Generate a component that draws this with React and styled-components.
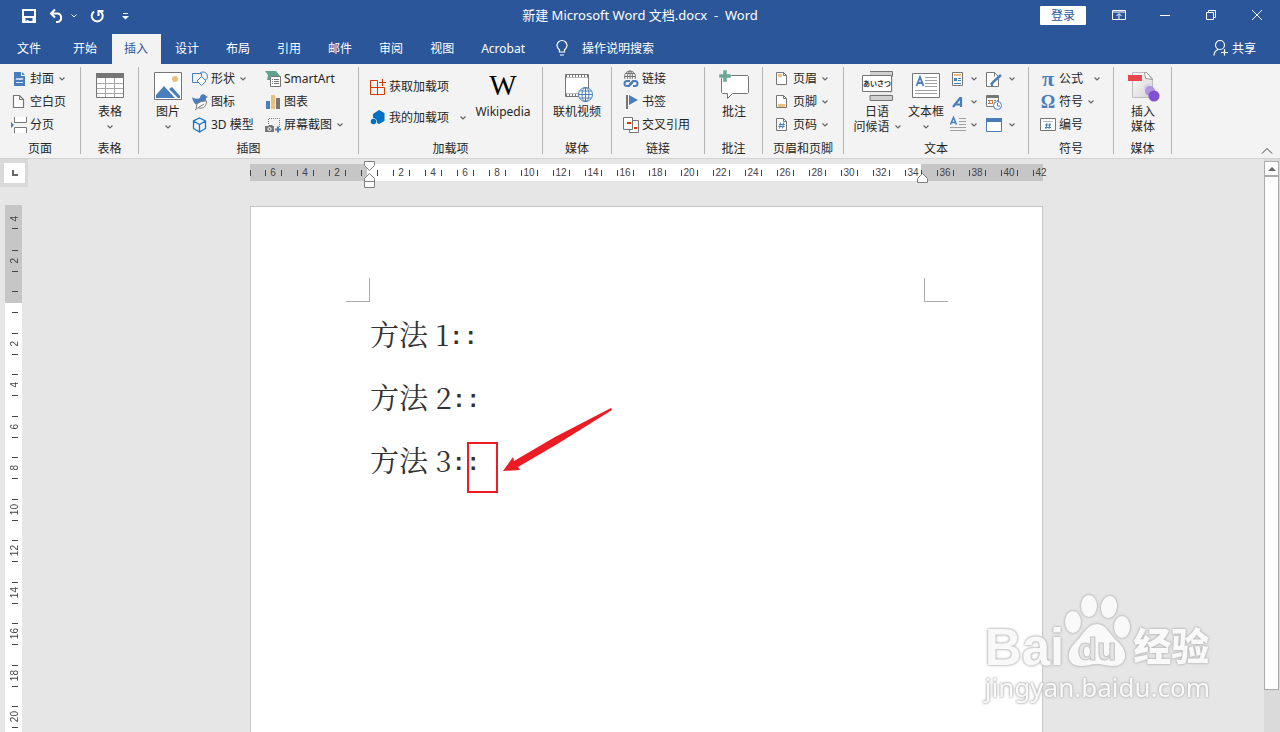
import React from 'react'
import styled, { createGlobalStyle, css } from 'styled-components'

const GlobalStyle = createGlobalStyle`
  * {
    box-sizing: border-box;
  }

  body {
    margin: 0;
    overflow: hidden;
    background: #e6e6e6;
    color: #262626;
    font: 12px/15px 'Noto Sans', 'Noto Sans CJK SC', sans-serif;
  }

  button {
    padding: 0;
    border: 0;
    background: none;
    color: inherit;
    font: inherit;
    white-space: nowrap;
  }

  svg {
    display: block;
    flex: none;
    overflow: visible;
  }
`

const blue = '#2b579a'
const iconBlue = '#4a7ebb'
const grey = '#767676'

const Window = styled.div`
  display: flex;
  flex-direction: column;
  height: 100vh;
`

/* title bar */

const Header = styled.header`
  background: ${blue};
  color: #fff;
`

const TitleBar = styled.div`
  display: grid;
  grid-template-columns: 1fr auto 1fr;
  align-items: center;
  height: 30px;
`

const QuickAccess = styled.div`
  display: flex;
  align-items: center;
  gap: 13px;
  padding: 2px 0 0 22px;
`

const UndoGroup = styled.div`
  display: flex;
  align-items: center;
  gap: 7px;
`

const CustomizeButton = styled.button`
  margin-left: 5px;
`

const Title = styled.h1`
  margin: 0;
  font-size: 13px;
  font-weight: normal;
  white-space: pre;
`

const WindowControls = styled.div`
  display: flex;
  align-items: center;
  justify-content: flex-end;
`

const LoginButton = styled.button`
  width: 46px;
  height: 19px;
  margin-right: 10px;
  border-radius: 1px;
  background: #fff;
  color: ${blue};
`

const ControlButton = styled.button`
  display: flex;
  align-items: center;
  justify-content: center;
  width: 46px;
  height: 30px;
`

const TabBar = styled.nav`
  display: flex;
  gap: 2px;
  height: 34px;
  padding: 4px 24px 0 5px;
`

const Tab = styled.button`
  padding: 0 13px 2px 12px;

  &:first-child {
    margin-right: 5px;
  }

  ${props => props.$active && css`
    background: #f3f3f3;
    color: ${blue};
  `}
`

const TellMe = styled.button`
  display: flex;
  align-items: center;
  gap: 14px;
  margin-left: 16px;
  padding-bottom: 2px;
`

const Share = styled.button`
  display: flex;
  align-items: center;
  gap: 4px;
  margin-left: auto;
  padding-bottom: 2px;
`

/* ribbon */

const RibbonBar = styled.div`
  display: flex;
  flex: none;
  padding: 3px 7px 4px 0;
  border-bottom: 1px solid #d2d2d2;
  background: #f3f3f3;
`

const GroupBox = styled.section`
  display: flex;
  flex-direction: column;
  flex: none;
  width: ${props => props.$width}px;
  height: 87px;
  border-right: 1px solid #b4b4b4;
`

const GroupContent = styled.div`
  display: flex;
  flex: none;
  height: 74px;
  padding-left: ${props => props.$pad}px;
`

const GroupLabel = styled.h2`
  margin: 0;
  font-size: 12px;
  font-weight: normal;
  line-height: 15px;
  text-align: center;
`

const Column = styled.div`
  display: flex;
  flex-direction: column;
  flex: none;
  width: ${props => props.$width ? `${props.$width}px` : 'auto'};
  padding-top: ${props => props.$tall ? 4 : 0}px;
`

const SmallButton = styled.button`
  display: flex;
  align-items: center;
  gap: 3px;
  height: ${props => props.$tall ? 31 : 23}px;
`

const BigButton = styled.button`
  display: flex;
  flex-direction: column;
  align-items: center;
  flex: none;
  width: ${props => props.$width}px;
  padding-top: 4px;

  > svg {
    margin-bottom: 1px;
  }
`

const ArrowLine = styled.span`
  display: flex;
  align-items: center;
  justify-content: center;
  height: 15px;
`

const Chevron = styled(ChevronIcon)`
  margin-left: ${props => props.$gap || 2}px;
`

const WikiMark = styled.span`
  height: 33px;
  color: #000;
  font: 29px/29px 'Liberation Serif', serif;
`

const Collapse = styled.button`
  align-self: flex-end;
  margin-left: auto;
`

/* document area */

const Workspace = styled.main`
  display: grid;
  grid-template-columns: 29px 1fr 16px;
  flex: 1;
  min-height: 0;
`

const LeftRail = styled.div`
  display: flex;
  flex-direction: column;
  min-height: 0;
`

const Corner = styled.div`
  flex: none;
  width: 28px;
  height: 28px;
  padding: 4px 3px 4px 4px;
  background: #d9d9d9;
`

const TabStop = styled.button`
  display: flex;
  align-items: center;
  justify-content: center;
  width: 21px;
  height: 20px;
  background: #fdfdfd;
`

const VerticalRuler = styled.div`
  flex: 1;
  width: 17px;
  min-height: 0;
  margin: 18px 0 0 5px;
  overflow: hidden;
  background: linear-gradient(#c6c6c6 98px, #fff 98px);
`

const VerticalScale = styled.div`
  margin-top: -7px;
`

const VerticalCell = styled.div`
  display: flex;
  align-items: center;
  justify-content: center;
  height: 42px;
  padding-left: 2px;
  color: #444;
  font: 10px/10px 'Liberation Sans', sans-serif;
  background:
    linear-gradient(#444, #444) 7px 10px / 6px 1px no-repeat,
    linear-gradient(#444, #444) 7px 31px / 6px 1px no-repeat;

  &:nth-child(even) {
    height: 41px;
  }

  &:first-child {
    background: linear-gradient(#444, #444) 7px 30px / 6px 1px no-repeat;
  }

  span {
    writing-mode: vertical-rl;
    transform: rotate(180deg);
  }
`

const Canvas = styled.div`
  display: flex;
  flex-direction: column;
  align-items: center;
  min-width: 0;
  min-height: 0;
  overflow: hidden;
`

const HorizontalRuler = styled.div`
  position: relative;
  display: flex;
  flex: none;
  width: 793px;
  height: 17px;
  margin: 5px 0 25px;
  padding-left: 7px;
  background:
    linear-gradient(#444, #444) 0 6px / 1px 6px no-repeat,
    linear-gradient(90deg, #c6c6c6 117px, #fff 117px, #fff 671px, #c6c6c6 671px);
`

const HorizontalCell = styled.div`
  display: flex;
  align-items: center;
  justify-content: center;
  flex: none;
  width: 32px;
  color: #444;
  font: 10px/17px 'Liberation Sans', sans-serif;
  background:
    linear-gradient(#444, #444) 8px 6px / 1px 6px no-repeat,
    linear-gradient(#444, #444) 24px 6px / 1px 6px no-repeat;

  &:last-of-type {
    background: linear-gradient(#444, #444) 8px 6px / 1px 6px no-repeat;
  }
`

const IndentMarker = styled.svg`
  position: absolute;
  top: ${props => props.$top}px;
  left: ${props => props.$left}px;
`

const Page = styled.article`
  position: relative;
  flex: 1;
  width: 793px;
  border: 1px solid #c6c6c6;
  border-bottom: 0;
  background: #fff;
`

const CropMarks = styled.div`
  display: flex;
  justify-content: space-between;
  padding: 71px 94px 0 95px;
`

const CropMark = styled.i`
  width: 24px;
  height: 24px;
  border-bottom: 1px solid #ababab;
  border-${props => props.$side}: 1px solid #ababab;
`

const Line = styled.p`
  height: 63px;
  margin: 0 119px;
  color: #333;
  font: 29px/63px 'Noto Serif CJK SC', 'Noto Sans CJK SC', serif;
  font-variant-numeric: tabular-nums;
`

const Colons = styled.span`
  font: bold 24px/24px 'Liberation Mono', monospace;
  vertical-align: 2px;
`

const Highlight = styled.div`
  position: absolute;
  top: 235px;
  left: 216px;
  width: 31px;
  height: 51px;
  border: 2px solid #ed1c24;
`

const Arrow = styled.svg`
  position: absolute;
  top: 201px;
  left: 252px;
`

const ScrollBar = styled.div`
  display: flex;
  flex-direction: column;
  padding: 2px 1px 0 0;
  background: #dadada;
`

const ScrollButton = styled.button`
  display: flex;
  align-items: center;
  justify-content: center;
  height: 15px;
  border: 1px solid #ababab;
  background: #fff;
`

const ScrollThumb = styled.div`
  height: 92%;
  max-height: calc(100% - 57px);
  border: 1px solid #ababab;
  background: #fff;
`

/* watermark */

const Watermark = styled.div`
  position: absolute;
  right: 70px;
  bottom: 28px;
  color: #f9f9f9;
  filter: drop-shadow(0 0 1px #aaa) drop-shadow(0 0 1px #ccc);
`

const Brand = styled.div`
  display: flex;
  align-items: flex-end;
  height: 76px;
  font: bold 51px/44px 'Liberation Sans', sans-serif;
`

const BrandCn = styled.span`
  font: 900 38px/52px 'Noto Sans CJK SC', sans-serif;
`

const Site = styled.div`
  font: 26px/34px 'Noto Sans', sans-serif;
`

/* icons */

function ChevronIcon({ className }) {
  return (
    <svg className={className} width="6" height="4" fill="none" stroke="#666" strokeWidth="1.2">
      <path d="M.5 .5L3 3L5.500 .5" />
    </svg>
  )
}

const Small = ({ children }) => (
  <svg width="16" height="16" viewBox="0 0 16 16" fill="none" stroke={grey}>
    {children}
  </svg>
)

const Big = ({ children }) => (
  <svg width="32" height="32" viewBox="0 0 32 32" fill="none" stroke={grey}>
    {children}
  </svg>
)

const Sheet = ({ children }) => (
  <Small>
    <path d="M2.500 1.500h7l3 3v9h-10z" fill="#fff" />
    <path d="M9.500 1.500v3h3" />
    {children}
  </Small>
)

const CoverIcon = () => (
  <Small>
    <path d="M3 1h7v4h4v10H3z" fill={iconBlue} stroke="none" />
    <path d="M11 1l3 3h-3z" fill={iconBlue} stroke="none" />
    <path d="M5 9l1-2 1 2 1-2 1 2 1-2 1 2 1-2M5 11.500h7" stroke="#fff" strokeWidth=".8" />
  </Small>
)

const BlankPageIcon = () => (
  <Small>
    <path d="M2.500 1.500h6l4 4v8h-10z" fill="#fff" strokeWidth="1.2" />
    <path d="M8.500 1.500v4h4" />
  </Small>
)

const PageBreakIcon = () => (
  <Small>
    <path d="M3.500 0v5.500h12V0M3.500 16v-5.500h12V16" fill="#fff" />
    <path d="M0 5l3 3-3 3z" fill={iconBlue} stroke="none" />
  </Small>
)

const TableIcon = () => (
  <Big>
    <path d="M2.500 2.500h27v24h-27z" fill="#fff" />
    <path d="M2 2h28v5H2z" fill={grey} stroke="none" />
    <path d="M3 12.500h26M3 17.500h26M3 22.500h26M11.500 7v19M20.500 7v19" stroke="#a6a6a6" />
  </Big>
)

const PictureIcon = () => (
  <Big>
    <path d="M2.500 1.500h27v27h-27z" fill="#fff" />
    <circle cx="23" cy="8" r="3" fill="#ecc07c" stroke="none" />
    <path d="M4 27v-3l8-9 11 12zM17 18l3-2 8 9v2h-2z" fill={iconBlue} stroke="none" />
  </Big>
)

const ShapesIcon = () => (
  <Small>
    <circle cx="11" cy="5.500" r="4.500" stroke={iconBlue} />
    <path d="M.5 2.500h9v9h-9z" fill="#f3f3f3" stroke={iconBlue} />
    <path d="M9.500 5.500l4.500 4.500-4.500 4.500L5 10z" fill="#fff" stroke={iconBlue} />
  </Small>
)

const IconsIcon = () => (
  <Small>
    <path d="M0 3c2 2 5 2 8 1 0-4 4-5 6-2l2 1-2 1c0 5-3 7-7 7-4 0-6-3-7-8z" fill={iconBlue} stroke="none" />
    <path d="M4.500 14c-1-5 4-7 10-7 0 5-3 8-8 7M3 16l4-3 5-3" fill="#fff" />
  </Small>
)

const CubeIcon = () => (
  <Small>
    <path d="M7.500 1l6 3v7.500l-6 3.500-6-3.500V4zM1.500 4l6 3.500L13.500 4M7.500 7.500V15" stroke="#1a74c4" strokeWidth="1.300" />
  </Small>
)

const SmartArtIcon = () => (
  <Small>
    <path d="M0 0h11l4 5H5v4H2l1-5z" fill="#5fa38c" stroke="none" />
    <path d="M5.500 5.500h10v10h-10z" fill="#fff" />
    <path d="M7 8.500h1M9 8.500h5M7 10.500h1M9 10.500h5M7 12.500h1M9 12.500h5" />
  </Small>
)

const ChartIcon = () => (
  <Small>
    <path d="M1 7h4v8H1z" fill={iconBlue} stroke="none" />
    <path d="M6 1h4v14H6z" fill="#ecc07c" stroke="none" />
    <path d="M11 4h4v11h-4z" fill={grey} stroke="none" />
  </Small>
)

const ScreenshotIcon = () => (
  <Small>
    <path d="M3.500 7V1.500h11V10" strokeDasharray="1 1" />
    <path d="M0 9h3l1-1h3l1 1h1v6H0z" fill={grey} stroke="none" />
    <circle cx="4.500" cy="12" r="1.500" stroke="#fff" />
    <path d="M13 9.500v6M10 12.500h6" stroke={iconBlue} strokeWidth="2" />
  </Small>
)

const StoreIcon = () => (
  <Small>
    <path d="M7.500 1.500h-7v14h14v-7H.5M7.500 1.500v14M12.500 0v7M9 3.500h7" stroke="#d83b01" />
  </Small>
)

const MyAddinsIcon = () => (
  <Small>
    <path d="M9 0l5.500 3v8L9 14l-2-1a4 4 0 0 0-4-5V4z" fill="#0072c6" stroke="none" />
    <circle cx="3.500" cy="11.500" r="2.800" fill="#0072c6" stroke="none" />
  </Small>
)

const VideoIcon = () => (
  <Big>
    <path d="M4.500 3.500h23v22h-23z" fill="#fff" />
    <path d="M5 5h22M5 24h14" strokeWidth="3" />
    <path d="M6 5h21M6 24h12" stroke="#fff" strokeWidth="2" strokeDasharray="2 1" />
    <circle cx="24.500" cy="23.500" r="7" fill="#fff" stroke={iconBlue} />
    <ellipse cx="24.500" cy="23.500" rx="3.500" ry="7" stroke={iconBlue} />
    <path d="M17.500 23.500h14M24.500 16.500v14M18.500 20h12M18.500 27h12" stroke={iconBlue} />
  </Big>
)

const HyperlinkIcon = () => (
  <Small>
    <circle cx="7" cy="5.500" r="5.500" />
    <ellipse cx="7" cy="5.500" rx="2.500" ry="5.500" />
    <path d="M1.500 5.500h11M2.500 2.500h9M7 .5V8" />
    <path d="M1 8h15v8H1z" fill="#f3f3f3" stroke="none" />
    <path d="M7 10H4a2.300 2.300 0 0 0 0 5h2l4-4M10 15h2a2.300 2.300 0 0 0 0-5h-2l-4 4" stroke={iconBlue} strokeWidth="2" />
  </Small>
)

const BookmarkIcon = () => (
  <Small>
    <path d="M4 1v14" strokeWidth="2" />
    <path d="M6 1l9 5-9 5z" fill={iconBlue} stroke="none" />
  </Small>
)

const CrossRefIcon = () => (
  <Small>
    <path d="M6.500 3.500h9v12h-9z" fill="#fff" />
    <path d="M.5 .5h9v12h-9z" fill="#fff" />
    <path d="M4 6h4M11 11h3" stroke="#d83b01" strokeWidth="2" />
  </Small>
)

const CommentIcon = () => (
  <Big>
    <path d="M5.500 4.500h24l1 1v16l-1 1h-15l-5 5v-5h-5l-1-1v-16z" fill="#fff" />
    <path d="M1 3h4v-4h4v4h4v4H9v4H5V7H1z" fill="#6fa796" stroke="#f3f3f3" strokeWidth=".5" />
  </Big>
)

const HeaderIcon = () => (
  <Sheet><path d="M4 3h4v3H4z" fill="#ecc07c" stroke="none" /></Sheet>
)

const FooterIcon = () => (
  <Sheet><path d="M4 10h7v3H4z" fill="#ecc07c" stroke="none" /></Sheet>
)

const PageNumberIcon = () => (
  <Sheet><path d="M6.500 5.500l-1 6M9.500 5.500l-1 6M5 7.500h6M4.500 9.500h6" stroke={iconBlue} /></Sheet>
)

const GreetingIcon = () => (
  <Big>
    <path d="M9 .5h22.500v29H9z" fill="#d0d0d0" stroke="none" />
    <path d="M9 .5h22.500v5M9 29.500h22.500v-5H9z" />
    <path d="M0 21.500h32v2H0z" fill="#f3f3f3" stroke="none" />
    <path d="M1.500 4.500h29v16h-29z" fill="#fff" />
    <text x="16" y="15" textAnchor="middle" fontSize="7" fontWeight="bold" fill="#333" stroke="none">あいさつ</text>
  </Big>
)

const TextBoxIcon = () => (
  <Big>
    <path d="M2.500 2.500h27v24h-27z" fill="#fff" />
    <path d="M15 6.500h12M15 9.500h12M15 12.500h12M15 15.500h12M5 19.500h22M5 22.500h22" stroke="#a0a0a0" />
    <path d="M6.500 15L10 6l3.500 9M7.500 12h5" stroke={iconBlue} strokeWidth="1.800" />
  </Big>
)

const QuickPartsIcon = () => (
  <Small>
    <path d="M2.500 1.500h10v13h-10z" fill="#fff" />
    <path d="M4 4h7" stroke="#ecc07c" strokeWidth="2" />
    <path d="M4 8.500h3" stroke={iconBlue} strokeWidth="3" />
    <path d="M8 7.500h3M8 9.500h3M4 12.500h7" stroke={iconBlue} />
  </Small>
)

const WordArtIcon = () => (
  <Small>
    <path d="M3 13l7-9h1v9M5 10.500h6" stroke={iconBlue} strokeWidth="2.200" />
  </Small>
)

const DropCapIcon = () => (
  <Small>
    <path d="M.5 7.500L3.500 .5l3 7M2 5.500h3.500" stroke={iconBlue} strokeWidth="1.500" />
    <path d="M9 1.500h7M9 4.500h7M9 7.500h7M0 10.500h16M0 13.500h16" stroke="#a0a0a0" />
  </Small>
)

const SignatureIcon = () => (
  <Small>
    <path d="M.5 1.500h8l4 4v10H.5z" fill="#fff" />
    <path d="M8.500 1.500v4" />
    <path d="M5 14l2-3 8-7M5 14h2" stroke={iconBlue} strokeWidth="2.500" />
  </Small>
)

const DateTimeIcon = () => (
  <Small>
    <path d="M.5 1.500h12v11H.5z" fill="#fff" />
    <path d="M1 3h11" strokeWidth="2" />
    <path d="M2 6.500h10M2 9.500h9" strokeDasharray="2 1" />
    <path d="M3.500 6.500h3v3h-3z" stroke="#e07b2a" fill="#fff" />
    <circle cx="11.500" cy="11.500" r="4" fill="#fff" stroke={iconBlue} />
    <path d="M11.500 9v3H14" stroke={iconBlue} />
  </Small>
)

const ObjectIcon = () => (
  <Small>
    <path d="M.5 1.500h15v13H.5z" fill="#fff" stroke={iconBlue} />
    <path d="M0 3h16" stroke={iconBlue} strokeWidth="4" />
  </Small>
)

const NumberIcon = () => (
  <Small>
    <path d="M.5 1.500h15v12H.5z" fill="#fff" />
    <path d="M3 4.500h10" stroke="#bbb" />
    <path d="M7 6l-1 6M10 6l-1 6M5 8h6M5 10.500h6" stroke={iconBlue} />
  </Small>
)

const SymbolMark = styled.span`
  width: 16px;
  color: ${iconBlue};
  font: bold ${props => props.$size}px/18px 'Liberation Serif', serif;
  text-align: center;
`

const MediaIcon = () => (
  <Big>
    <defs>
      <linearGradient id="sheet" x1="0" y1="0" x2="1" y2="1">
        <stop offset="0" stopColor="#fff" />
        <stop offset="1" stopColor="#d2d2d2" />
      </linearGradient>
    </defs>
    <path d="M5.500 1.500h14l6 6v19h-20z" fill="url(#sheet)" stroke="#bdbdbd" />
    <path d="M17.500 1.500l1 6 7 1-6-7z" fill="#fff" stroke="#999" />
    <path d="M1 4h14v6H1z" fill="#e5474b" stroke="none" />
    <circle cx="21" cy="17" r="4" fill="#d9cdf0" stroke="none" />
    <circle cx="23" cy="20" r="5" fill="#b094e0" stroke="none" />
    <circle cx="27" cy="25" r="5.500" fill="#8250d4" stroke="none" />
  </Big>
)

const SaveIcon = () => (
  <svg width="14" height="14" fill="none" stroke="#fff" strokeWidth="2">
    <path d="M1 1h12v12H1zM1 8h12" />
    <path d="M2 8v5M12 8v5" strokeWidth="3" />
    <path d="M5.500 11v3" />
  </svg>
)

const UndoIcon = () => (
  <svg width="15" height="14" fill="none" stroke="#fff" strokeWidth="2">
    <path d="M6 .5L2 4.500l4 4M2 4.500h6.500a4.300 4.300 0 0 1 0 8.500H7" />
  </svg>
)

const RedoIcon = () => (
  <svg width="14" height="14" fill="none" stroke="#fff" strokeWidth="2">
    <path d="M4 2.500a5.500 5.500 0 1 0 6.500 0M8.500 7V2h5" />
  </svg>
)

const CustomizeIcon = () => (
  <svg width="7" height="7" fill="#fff">
    <path d="M1 0h5v1H1zM0 3h7L3.500 6.500z" />
  </svg>
)

const WhiteChevron = () => (
  <svg width="6" height="4" fill="none" stroke="#fff">
    <path d="M.5 .5L3 3L5.500 .5" />
  </svg>
)

const BulbIcon = () => (
  <svg width="12" height="16" fill="none" stroke="#fff" strokeWidth="1.200">
    <path d="M3.500 12V10C2 8.500 1 7.500 1 5.500a5 5 0 0 1 10 0c0 2-1 3-2.500 4.500v2zM4 15h4" />
  </svg>
)

const PersonIcon = () => (
  <svg width="15" height="16" fill="none" stroke="#fff" strokeWidth="1.200">
    <circle cx="7" cy="5" r="4.500" />
    <path d="M1 15.500c0-3 2-5 4-6M11.500 9v6.500M8 12.500h7" />
  </svg>
)

const Paw = () => (
  <svg width="69" height="76" viewBox="1 0 69 76" fill="currentColor">
    <ellipse cx="10" cy="28" rx="8" ry="11" />
    <ellipse cx="26" cy="12" rx="8" ry="11" />
    <ellipse cx="46" cy="13" rx="8" ry="11" transform="rotate(8 46 13)" />
    <ellipse cx="59" cy="33" rx="8" ry="11" />
    <path d="M34 30c9 0 12 10 21 18 12 11 8 24-5 24-7 0-10-2-16-2s-10 2-16 2C4 72 2 59 12 49c9-9 12-19 22-19z" />
    <text x="34" y="66" textAnchor="middle" fontSize="32" fill="#e4e4e4" stroke="#c4c4c4" strokeWidth="1">du</text>
  </svg>
)

const Group = ({ label, width, pad, children }) => (
  <GroupBox $width={width} aria-label={label}>
    <GroupContent $pad={pad}>{children}</GroupContent>
    <GroupLabel>{label}</GroupLabel>
  </GroupBox>
)

const Item = ({ icon, label, title, arrow, gap, tall }) => (
  <SmallButton $tall={tall} aria-label={label || title}>
    {icon}
    {label}
    {arrow && <Chevron $gap={gap} />}
  </SmallButton>
)

const Ribbon = () => (
  <RibbonBar>
    <Group label="页面" width={81} pad={11}>
      <Column>
        <Item icon={<CoverIcon />} label="封面" arrow />
        <Item icon={<BlankPageIcon />} label="空白页" />
        <Item icon={<PageBreakIcon />} label="分页" />
      </Column>
    </Group>
    <Group label="表格" width={58} pad={5}>
      <BigButton $width={48}>
        <TableIcon />
        表格
        <ArrowLine><ChevronIcon /></ArrowLine>
      </BigButton>
    </Group>
    <Group label="插图" width={220} pad={5}>
      <BigButton $width={48}>
        <PictureIcon />
        图片
        <ArrowLine><ChevronIcon /></ArrowLine>
      </BigButton>
      <Column $width={73}>
        <Item icon={<ShapesIcon />} label="形状" arrow />
        <Item icon={<IconsIcon />} label="图标" />
        <Item icon={<CubeIcon />} label="3D 模型" />
      </Column>
      <Column>
        <Item icon={<SmartArtIcon />} label="SmartArt" />
        <Item icon={<ChartIcon />} label="图表" />
        <Item icon={<ScreenshotIcon />} label="屏幕截图" arrow />
      </Column>
    </Group>
    <Group label="加载项" width={184} pad={11}>
      <Column $width={103} $tall>
        <Item icon={<StoreIcon />} label="获取加载项" tall />
        <Item icon={<MyAddinsIcon />} label="我的加载项" arrow gap={8} tall />
      </Column>
      <BigButton $width={60}>
        <WikiMark>W</WikiMark>
        Wikipedia
      </BigButton>
    </Group>
    <Group label="媒体" width={69} pad={4}>
      <BigButton $width={60}>
        <VideoIcon />
        联机视频
      </BigButton>
    </Group>
    <Group label="链接" width={93} pad={11}>
      <Column>
        <Item icon={<HyperlinkIcon />} label="链接" />
        <Item icon={<BookmarkIcon />} label="书签" />
        <Item icon={<CrossRefIcon />} label="交叉引用" />
      </Column>
    </Group>
    <Group label="批注" width={58} pad={5}>
      <BigButton $width={48}>
        <CommentIcon />
        批注
      </BigButton>
    </Group>
    <Group label="页眉和页脚" width={81} pad={11}>
      <Column>
        <Item icon={<HeaderIcon />} label="页眉" arrow />
        <Item icon={<FooterIcon />} label="页脚" arrow />
        <Item icon={<PageNumberIcon />} label="页码" arrow />
      </Column>
    </Group>
    <Group label="文本" width={185} pad={8}>
      <BigButton $width={50}>
        <GreetingIcon />
        日语
        <ArrowLine>问候语<Chevron $gap={5} /></ArrowLine>
      </BigButton>
      <BigButton $width={48}>
        <TextBoxIcon />
        文本框
        <ArrowLine><ChevronIcon /></ArrowLine>
      </BigButton>
      <Column $width={36}>
        <Item icon={<QuickPartsIcon />} title="文档部件" arrow />
        <Item icon={<WordArtIcon />} title="艺术字" arrow />
        <Item icon={<DropCapIcon />} title="首字下沉" arrow />
      </Column>
      <Column>
        <Item icon={<SignatureIcon />} title="签名行" arrow gap={4} />
        <Item icon={<DateTimeIcon />} title="日期和时间" />
        <Item icon={<ObjectIcon />} title="对象" arrow gap={4} />
      </Column>
    </Group>
    <Group label="符号" width={85} pad={11}>
      <Column>
        <Item icon={<SymbolMark $size={22}>π</SymbolMark>} label="公式" arrow gap={8} />
        <Item icon={<SymbolMark $size={18}>Ω</SymbolMark>} label="符号" arrow />
        <Item icon={<NumberIcon />} label="编号" />
      </Column>
    </Group>
    <Group label="媒体" width={58} pad={5}>
      <BigButton $width={48}>
        <MediaIcon />
        插入
        <span>媒体</span>
      </BigButton>
    </Group>
    <Collapse aria-label="折叠功能区">
      <svg width="12" height="6" fill="none" stroke="#444">
        <path d="M1 5.500l5-5 5 5" />
      </svg>
    </Collapse>
  </RibbonBar>
)

const tabs = ['文件', '开始', '插入', '设计', '布局', '引用', '邮件', '审阅', '视图', 'Acrobat']

const scale = last => Array.from({ length: last / 2 }, (_, i) => (i + 1) * 2)
const columns = [6, 4, 2, '', ...scale(42)]
const rows = [4, 2, '', ...scale(20)]

const App = () => (
  <Window>
    <GlobalStyle />
    <Header>
      <TitleBar>
        <QuickAccess>
          <button aria-label="保存"><SaveIcon /></button>
          <UndoGroup>
            <button aria-label="撤消"><UndoIcon /></button>
            <WhiteChevron />
          </UndoGroup>
          <button aria-label="重复"><RedoIcon /></button>
          <CustomizeButton aria-label="自定义快速访问工具栏"><CustomizeIcon /></CustomizeButton>
        </QuickAccess>
        <Title>{'新建 Microsoft Word 文档.docx  -  Word'}</Title>
        <WindowControls>
          <LoginButton>登录</LoginButton>
          <ControlButton aria-label="功能区显示选项">
            <svg width="14" height="12" fill="none" stroke="#fff">
              <path d="M.5 1.500h13v9H.5zM1 3h12M7 10V5M4.500 7L7 4.500 9.500 7" />
            </svg>
          </ControlButton>
          <ControlButton aria-label="最小化">
            <svg width="10" height="1" stroke="#fff"><path d="M0 .5h10" /></svg>
          </ControlButton>
          <ControlButton aria-label="还原">
            <svg width="10" height="10" fill="none" stroke="#fff">
              <path d="M.5 2.500h7v7h-7zM2.500 2.500v-2h7v7h-2" />
            </svg>
          </ControlButton>
          <ControlButton aria-label="关闭">
            <svg width="10" height="10" stroke="#fff"><path d="M0 0l10 10M10 0L0 10" /></svg>
          </ControlButton>
        </WindowControls>
      </TitleBar>
      <TabBar>
        {tabs.map(tab => (
          <Tab key={tab} $active={tab === '插入'}>{tab}</Tab>
        ))}
        <TellMe><BulbIcon />操作说明搜索</TellMe>
        <Share><PersonIcon />共享</Share>
      </TabBar>
    </Header>
    <Ribbon />
    <Workspace>
      <LeftRail>
        <Corner>
          <TabStop aria-label="制表符">
            <svg width="6" height="6" fill="none" stroke="#666" strokeWidth="2">
              <path d="M1 0v5h5" />
            </svg>
          </TabStop>
        </Corner>
        <VerticalRuler>
          <VerticalScale>
            {rows.map((n, i) => <VerticalCell key={i}><span>{n}</span></VerticalCell>)}
          </VerticalScale>
        </VerticalRuler>
      </LeftRail>
      <Canvas>
        <HorizontalRuler>
          {columns.map((n, i) => <HorizontalCell key={i}>{n}</HorizontalCell>)}
          <IndentMarker $top={-3} $left={114} width="11" height="28" fill="#fff" stroke="#808080">
            <path d="M.5 .5h10v4l-5 5-5-5zM5.500 12.500l5 5v9H.5v-9zM.5 20.500h10" />
          </IndentMarker>
          <IndentMarker $top={9} $left={667} width="11" height="10" fill="#fff" stroke="#808080">
            <path d="M5.500 .5l5 5v4H.5v-4z" />
          </IndentMarker>
        </HorizontalRuler>
        <Page>
          <CropMarks>
            <CropMark $side="right" />
            <CropMark $side="left" />
          </CropMarks>
          {[1, 2, 3].map(n => (
            <Line key={n}>方法 {n}<Colons>::</Colons></Line>
          ))}
          <Highlight />
          <Arrow width="110" height="64" fill="#ed1c24">
            <path d="M0 63L10 49L11 53L52 29L108 0L109 2L56 35L15 59L17 62z" />
          </Arrow>
        </Page>
      </Canvas>
      <ScrollBar>
        <ScrollButton aria-label="向上滚动">
          <svg width="8" height="4" fill="#666"><path d="M0 4l4-4 4 4z" /></svg>
        </ScrollButton>
        <ScrollThumb />
      </ScrollBar>
    </Workspace>
    <Watermark>
      <Brand>
        Bai
        <Paw />
        <BrandCn>经验</BrandCn>
      </Brand>
      <Site>jingyan.baidu.com</Site>
    </Watermark>
  </Window>
)

export default App
